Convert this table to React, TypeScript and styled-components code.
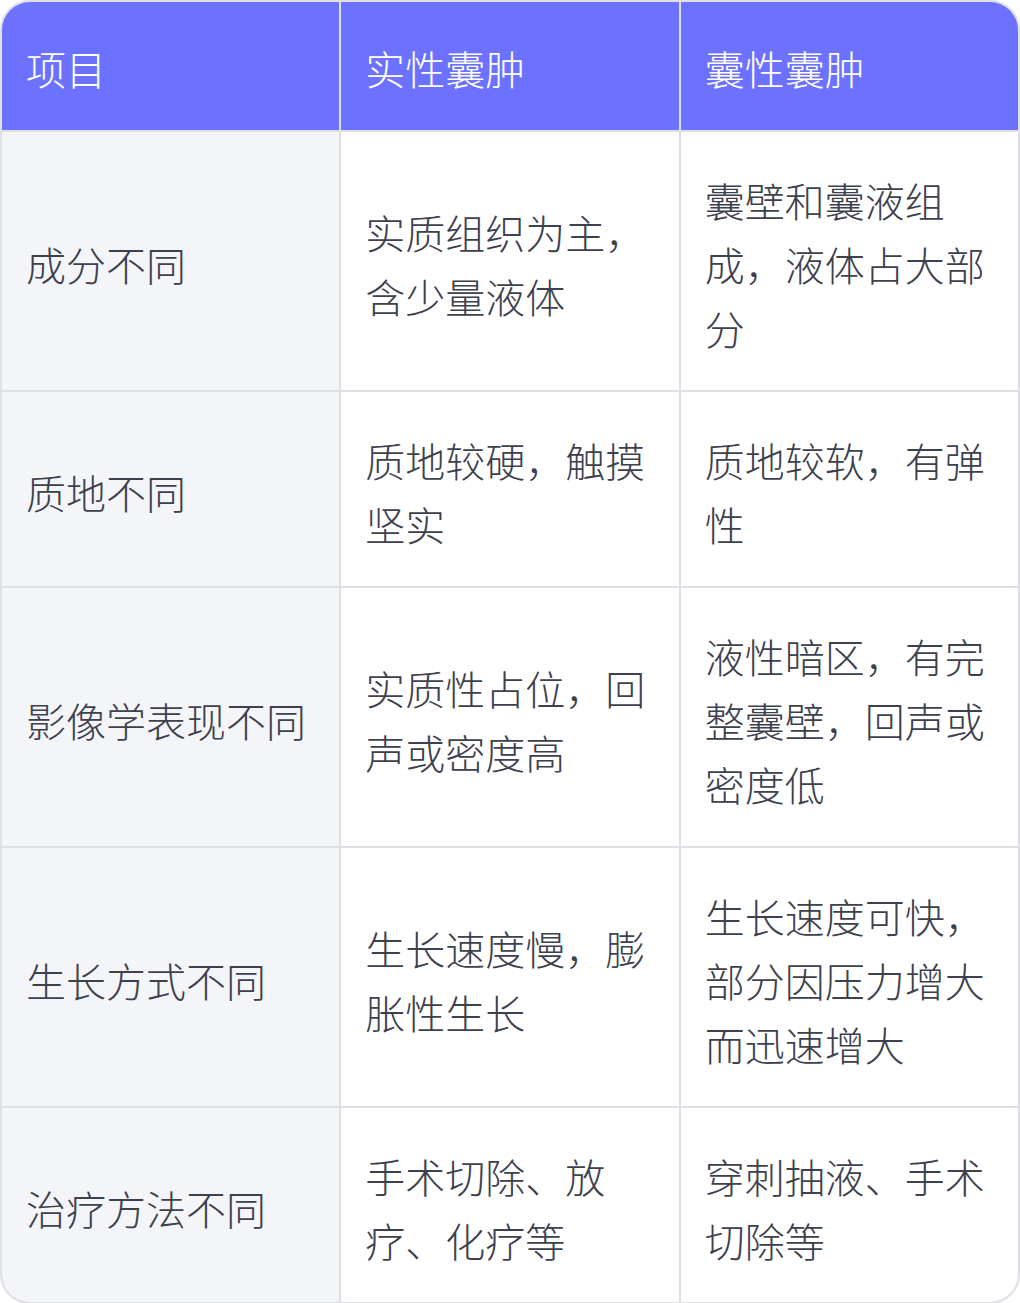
import React from "react";
import styled, { createGlobalStyle } from "styled-components";

const GlobalStyle = createGlobalStyle`
  html, body {
    margin: 0;
    padding: 0;
    background: #ffffff;
  }
  body {
    font-family: "Noto Sans CJK SC", "Noto Sans", sans-serif;
  }
`;

const Table = styled.div`
  width: 1020px;
  box-sizing: border-box;
  border: 2px solid #dfe0e6;
  border-radius: 30px;
  overflow: hidden;
  background: #dfe0e6;
  display: grid;
  grid-template-columns: 1fr 1fr 1fr;
  gap: 2px;
`;

const Cell = styled.div<{ $variant: "head" | "label" | "body" }>`
  box-sizing: border-box;
  display: flex;
  align-items: center;
  padding: ${(p) => (p.$variant === "head" ? "34px 24px 30px" : "36px 24px 30px")};
  font-size: 40px;
  line-height: 64px;
  font-weight: 300;
  color: ${(p) => (p.$variant === "head" ? "#ffffff" : "#3d404d")};
  background: ${(p) =>
    p.$variant === "head" ? "#6c72ff" : p.$variant === "label" ? "#f4f5f9" : "#ffffff"};
  word-break: break-all;
  line-break: strict;
`;

const headers = ["项目", "实性囊肿", "囊性囊肿"];

const rows: [string, string, string][] = [
  ["成分不同", "实质组织为主，含少量液体", "囊壁和囊液组成，液体占大部分"],
  ["质地不同", "质地较硬，触摸坚实", "质地较软，有弹性"],
  ["影像学表现不同", "实质性占位，回声或密度高", "液性暗区，有完整囊壁，回声或密度低"],
  ["生长方式不同", "生长速度慢，膨胀性生长", "生长速度可快，部分因压力增大而迅速增大"],
  ["治疗方法不同", "手术切除、放疗、化疗等", "穿刺抽液、手术切除等"],
];

export default function App() {
  return (
    <>
      <GlobalStyle />
      <Table>
        {headers.map((h) => (
          <Cell key={h} $variant="head">
            {h}
          </Cell>
        ))}
        {rows.map((r) => (
          <React.Fragment key={r[0]}>
            <Cell $variant="label">{r[0]}</Cell>
            <Cell $variant="body">{r[1]}</Cell>
            <Cell $variant="body">{r[2]}</Cell>
          </React.Fragment>
        ))}
      </Table>
    </>
  );
}
